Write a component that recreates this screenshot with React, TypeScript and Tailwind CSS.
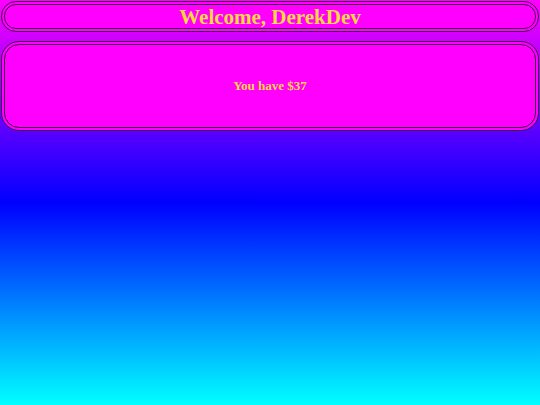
import React from "react";

export default function App() {
  return (
    <div
      className="h-screen w-full bg-[linear-gradient(to_bottom,#ff00ff,#0000ff_50%,#00ffff)] px-px pt-px flex flex-col gap-[9px]"
      style={{ fontFamily: '"Liberation Serif", "Times New Roman", serif' }}
    >
      <div className="h-[31px] rounded-[15px] border-4 border-double border-[#3f0a45] bg-[#ff00ff] flex items-center justify-center">
        <h1 className="text-[21px] font-bold leading-none text-[#ffd93d] translate-y-px">Welcome, DerekDev</h1>
      </div>
      <div className="h-[90px] rounded-[18px] border-4 border-double border-[#3f0a45] bg-[#ff00ff] flex items-center justify-center">
        <p className="text-[13px] font-bold leading-none text-[#ffd93d] -translate-y-px">You have $37</p>
      </div>
    </div>
  );
}
